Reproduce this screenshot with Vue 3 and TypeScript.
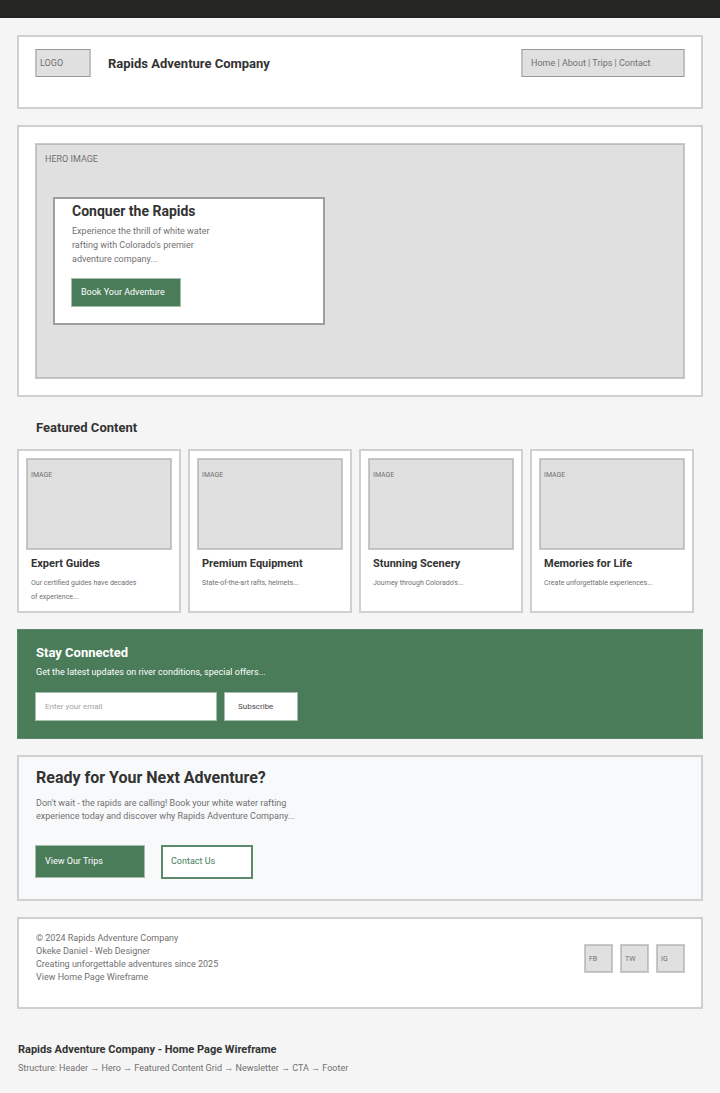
<script setup lang="ts">
import { ref } from 'vue'

interface Card {
  title: string
  text: string
}

const navItems: string[] = ['Home', 'About', 'Trips', 'Contact']
const cards: Card[] = [
  { title: 'Expert Guides', text: 'Our certified guides have decades\nof experience...' },
  { title: 'Premium Equipment', text: 'State-of-the-art rafts, helmets...' },
  { title: 'Stunning Scenery', text: "Journey through Colorado's..." },
  { title: 'Memories for Life', text: 'Create unforgettable experiences...' },
]
const socials: string[] = ['FB', 'TW', 'IG']
const email = ref('')
</script>

<template>
  <div class="page">
    <div class="topbar"></div>
    <div class="content">
      <header class="panel header">
        <div class="chip logo">LOGO</div>
        <h1 class="brand">Rapids Adventure Company</h1>
        <nav class="chip nav">
          <template v-for="(item, i) in navItems" :key="item">
            <span v-if="i > 0"> | </span><a href="#">{{ item }}</a>
          </template>
        </nav>
      </header>

      <section class="panel hero">
        <div class="placeholder hero-image">
          <span class="hero-label">HERO IMAGE</span>
          <div class="hero-card">
            <h2>Conquer the Rapids</h2>
            <p>Experience the thrill of white water rafting with Colorado's premier adventure company...</p>
            <button type="button" class="btn">Book Your Adventure</button>
          </div>
        </div>
      </section>

      <section class="featured">
        <h2 class="section-title">Featured Content</h2>
        <div class="grid">
          <article v-for="card in cards" :key="card.title" class="card">
            <div class="placeholder card-image">IMAGE</div>
            <h3>{{ card.title }}</h3>
            <p>{{ card.text }}</p>
          </article>
        </div>
      </section>

      <section class="newsletter">
        <h2>Stay Connected</h2>
        <p>Get the latest updates on river conditions, special offers...</p>
        <form class="signup" @submit.prevent>
          <input v-model="email" type="email" placeholder="Enter your email" aria-label="Enter your email" />
          <button type="submit">Subscribe</button>
        </form>
      </section>

      <section class="panel cta">
        <h2>Ready for Your Next Adventure?</h2>
        <p>Don't wait - the rapids are calling! Book your white water rafting experience today and discover why Rapids Adventure Company...</p>
        <div class="actions">
          <button type="button" class="btn trips">View Our Trips</button>
          <button type="button" class="btn outline">Contact Us</button>
        </div>
      </section>

      <footer class="panel footer">
        <div class="footer-text">
          <div>© 2024 Rapids Adventure Company</div>
          <div>Okeke Daniel - Web Designer</div>
          <div>Creating unforgettable adventures since 2025</div>
          <a href="#">View Home Page Wireframe</a>
        </div>
        <div class="socials">
          <a v-for="name in socials" :key="name" href="#" class="placeholder social">{{ name }}</a>
        </div>
      </footer>

      <div class="caption">
        <h2>Rapids Adventure Company - Home Page Wireframe</h2>
        <p>Structure: Header → Hero → Featured Content Grid → Newsletter → CTA → Footer</p>
      </div>
    </div>
  </div>
</template>

<style>
body {
  margin: 0;
  background: #f5f5f5;
}
</style>

<style scoped>
.page,
.page * {
  box-sizing: border-box;
}
.page {
  font-family: Roboto, 'Liberation Sans', sans-serif;
  font-size: 9px;
  line-height: 13px;
  color: #707070;
}
h1,
h2,
h3,
p {
  margin: 0;
}
h1,
h2,
h3 {
  color: #333;
  font-weight: 700;
}
a {
  color: inherit;
  text-decoration: none;
}
button,
input {
  font-family: inherit;
  font-size: 9px;
  line-height: 13px;
  border-radius: 0;
  margin: 0;
}
button {
  text-align: left;
  cursor: pointer;
}
.topbar {
  height: 18px;
  background: #262624;
  border-bottom: 3px solid #272224;
}
.content {
  padding: 17px 17px 18px;
}
.panel {
  background: #fff;
  border: 2px solid #d0d0d0;
}
.placeholder {
  background: #e0e0e0;
  border: 1px solid #cacaca;
  box-shadow: inset 0 0 0 1px #bdbdbd;
}
.chip {
  height: 28px;
  background: #e0e0e0;
  border: solid;
  border-width: 1px 2px;
  border-color: #999 #c0c0c0;
  line-height: 26px;
}

.header {
  display: flex;
  align-items: flex-start;
  padding: 12px 16px 30px;
}
.logo {
  width: 56px;
  padding-left: 3px;
}
.brand {
  margin-left: 17px;
  font-size: 13px;
  line-height: 30px;
  height: 28px;
}
.nav {
  width: 164px;
  margin-left: auto;
  padding-left: 8px;
  white-space: pre;
}

.hero {
  margin-top: 16px;
  padding: 16px;
}
.hero-image {
  padding: 9px 8px 53px;
}
.hero-label {
  display: block;
  padding-left: 1px;
}
.hero-card {
  width: 272px;
  max-width: 100%;
  margin: 31px 0 0 9px;
  padding: 4px 16px 16px;
  background: #fff;
  border: 2px solid #9e9e9e;
}
.hero-card h2 {
  padding-left: 1px;
  font-size: 14px;
  line-height: 16px;
}
.hero-card p {
  max-width: 150px;
  margin: 5px 0 12px;
  padding-left: 1px;
  line-height: 14px;
}
.btn {
  display: block;
  width: 110px;
  height: 29px;
  padding: 0 9px;
  color: #fff;
  background: #4a7c59;
  border: 1px solid #a4bdac;
}

.section-title {
  padding: 23px 19px 13px;
  font-size: 13px;
  line-height: 16px;
}
.grid {
  display: grid;
  grid-template-columns: repeat(4, 1fr);
  gap: 7px;
  padding-right: 9px;
}
.card {
  padding: 7px;
  background: #fff;
  border: 2px solid #d0d0d0;
}
.card-image {
  height: 92px;
  padding: 10px 4px;
  font-size: 7px;
}
.card h3 {
  margin: 7px 0 5px;
  padding-left: 5px;
  font-size: 11px;
  line-height: 14px;
}
.card p {
  padding-left: 5px;
  font-size: 7px;
  line-height: 14px;
  white-space: pre-line;
}

.newsletter {
  margin-top: 16px;
  padding: 15px 17px 17px;
  color: #fff;
  background: #4a7c59;
  border: 1px solid #5c8969;
}
.newsletter h2 {
  padding-left: 1px;
  color: #fff;
  font-size: 13px;
  line-height: 16px;
}
.newsletter p {
  padding: 5px 0 13px 1px;
}
.signup {
  display: flex;
  gap: 7px;
}
.signup input,
.signup button {
  height: 29px;
  font-size: 8px;
  background: #fff;
  border: 1px solid #a4bdac;
}
.signup input {
  width: 182px;
  padding: 0 9px;
  color: #333;
}
.signup input::placeholder {
  color: #a3a3a3;
  opacity: 1;
}
.signup button {
  width: 74px;
  padding: 0 13px;
  color: #484848;
}

.cta {
  margin-top: 16px;
  padding: 11px 16px 20px;
  background: #f8f9fa;
}
.cta h2 {
  padding-left: 1px;
  font-size: 16px;
  line-height: 20px;
}
.cta p {
  max-width: 280px;
  padding: 9px 0 22px 1px;
}
.actions {
  display: flex;
  align-items: flex-start;
  gap: 16px;
}
.trips {
  height: 33px;
}
.outline {
  width: 92px;
  height: 34px;
  padding: 0 8px 2px;
  color: #4a7c59;
  background: #fff;
  border: 2px solid #5c8969;
}

.footer {
  display: flex;
  justify-content: space-between;
  align-items: flex-start;
  margin-top: 16px;
  padding: 13px 16px 23px 17px;
}
.footer-text a {
  display: block;
}
.socials {
  display: flex;
  gap: 7px;
  padding-top: 12px;
}
.social {
  width: 29px;
  height: 29px;
  padding-left: 4px;
  font-size: 7px;
  line-height: 28px;
}

.caption {
  padding: 34px 1px 0;
}
.caption h2 {
  margin-bottom: 5px;
  font-size: 11px;
  line-height: 14px;
}
</style>
